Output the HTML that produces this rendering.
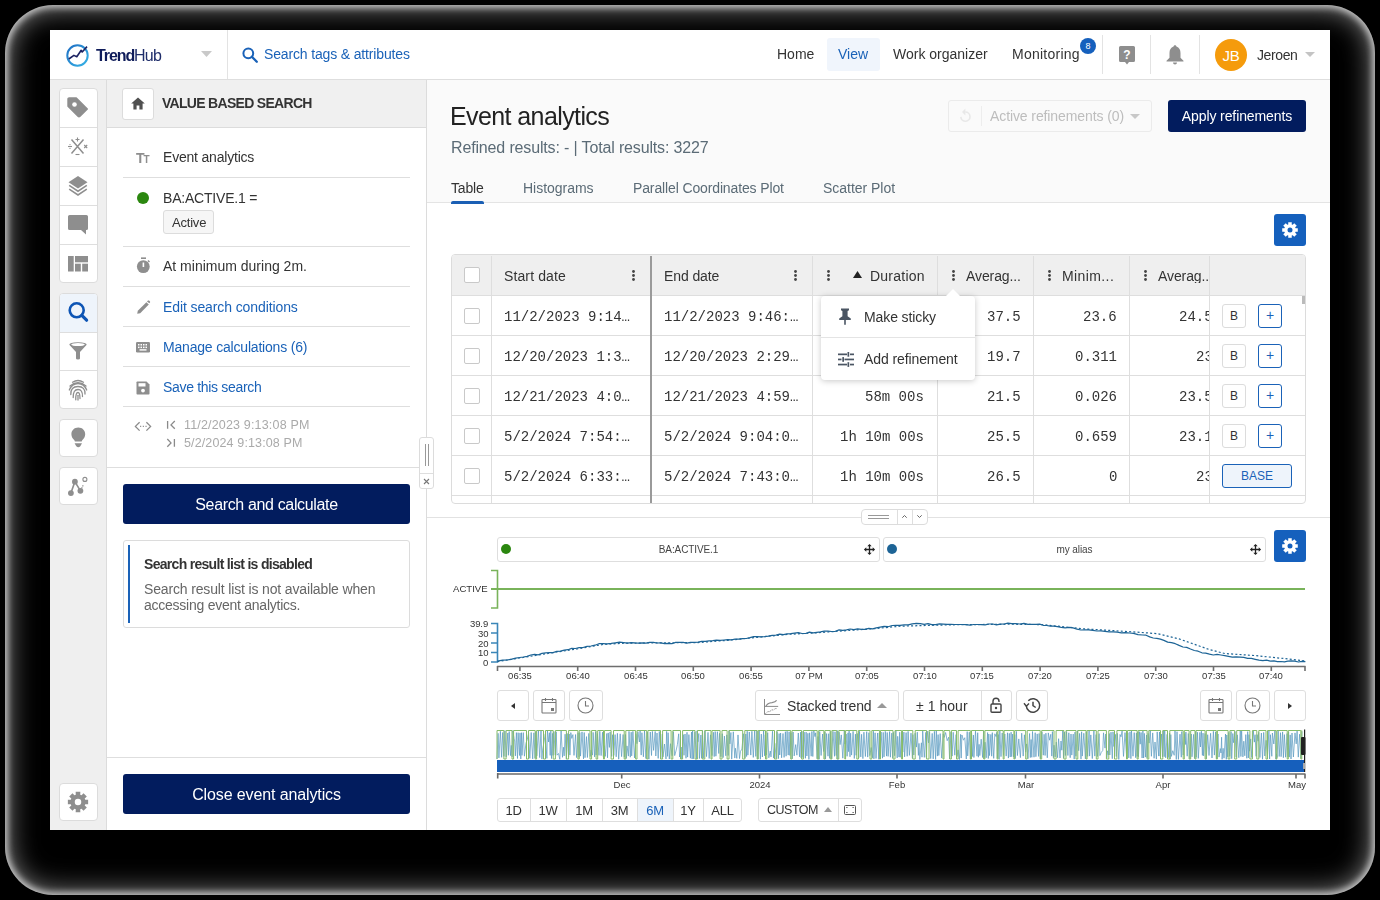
<!DOCTYPE html>
<html><head><meta charset="utf-8">
<style>
*{box-sizing:border-box}
html,body{margin:0;padding:0}
body{width:1380px;height:900px;background:#000;position:relative;overflow:hidden;font-family:"Liberation Sans",sans-serif;color:#333}
.a{position:absolute}
.t{position:absolute;white-space:nowrap;line-height:1;will-change:transform}
.mono{font-family:"Liberation Mono",monospace}
#rim{position:absolute;left:5px;top:5px;width:1370px;height:890px;border-radius:48px;background:#000;box-shadow:inset 0 0 6px 3px rgba(255,255,255,.6),inset 0 0 30px 0 rgba(255,255,255,.65)}
#win{position:absolute;left:50px;top:30px;width:1280px;height:800px;background:#fff}
.box{position:absolute;border:1px solid #dcdcdc;border-radius:4px;background:#fff}
.hl{position:absolute;height:1px;background:#dedede}
.vl{position:absolute;width:1px;background:#dedede}
svg{position:absolute;overflow:visible}
.blue{color:#1a62b8}
</style></head><body>
<div id="rim"></div>
<div id="win"></div>

<!-- ============ TOP BAR ============ -->
<div class="a" style="left:50px;top:79px;width:1280px;height:1px;background:#dedede"></div>
<!-- logo -->
<svg style="left:66px;top:44px" width="23" height="23" viewBox="0 0 23 23">
 <defs><linearGradient id="lg" x1="0" y1="0" x2="1" y2="1"><stop offset="0" stop-color="#1f6fc4"/><stop offset="1" stop-color="#36b3e6"/></linearGradient></defs>
 <circle cx="11.5" cy="11.5" r="10.2" fill="none" stroke="url(#lg)" stroke-width="2"/>
 <path d="M2.8 15 L7.9 11.4 L10.8 12.8 L15.2 6.3 L16.2 8 L21 2.6" fill="none" stroke="#1c2262" stroke-width="1.6" stroke-linejoin="round"/>
</svg>
<div class="t" style="left:95.5px;top:47.5px;font-size:16px;color:#0f1c5a"><b style="letter-spacing:-1.1px">Trend</b><span style="letter-spacing:-0.8px;color:#1f2d6a">Hub</span></div>
<svg style="left:201px;top:51px" width="11" height="6"><path d="M0 0H11L5.5 6Z" fill="#c9c9c9"/></svg>
<div class="a" style="left:227px;top:30px;width:1px;height:49px;background:#e3e3e3"></div>
<!-- search -->
<svg style="left:242px;top:47px" width="16" height="16" viewBox="0 0 16 16"><circle cx="6.3" cy="6.3" r="4.9" fill="none" stroke="#1a62b8" stroke-width="2"/><path d="M9.8 9.8L14.8 14.8" stroke="#1a62b8" stroke-width="2.3" stroke-linecap="round"/></svg>
<div class="t blue" style="left:264px;top:47px;font-size:14px;letter-spacing:-0.15px">Search tags &amp; attributes</div>

<!-- nav -->
<div class="t" style="left:777px;top:47px;font-size:14px;color:#333">Home</div>
<div class="a" style="left:827px;top:38px;width:53px;height:33px;background:#f0f5fc;border-radius:3px"></div>
<div class="t blue" style="left:838px;top:47px;font-size:14px">View</div>
<div class="t" style="left:893px;top:47px;font-size:14px;color:#333">Work organizer</div>
<div class="t" style="left:1012px;top:47px;font-size:14px;color:#333;letter-spacing:0.25px">Monitoring</div>
<div class="a" style="left:1080px;top:38px;width:16px;height:16px;border-radius:50%;background:#1560bd;color:#fff;font-size:9px;line-height:16px;text-align:center">8</div>
<div class="a" style="left:1102px;top:35px;width:1px;height:39px;background:#e3e3e3"></div>
<svg style="left:1119px;top:46px" width="16" height="19" viewBox="0 0 16 19"><path d="M1.5 0H14.5Q16 0 16 1.5V14.5Q16 16 14.5 16H10L8 18.5L6 16H1.5Q0 16 0 14.5V1.5Q0 0 1.5 0Z" fill="#8e8e8e"/><text x="8" y="12.8" font-size="12" font-weight="bold" fill="#fff" text-anchor="middle" font-family="Liberation Sans">?</text></svg>
<div class="a" style="left:1150px;top:35px;width:1px;height:39px;background:#e3e3e3"></div>
<svg style="left:1166px;top:44px" width="18" height="21" viewBox="0 0 18 21"><path d="M9 1.2C9.9 1.2 10.4 1.8 10.4 2.6C13.3 3.4 14.5 6 14.5 9V13.8L17.5 16.8V17.6H0.5V16.8L3.5 13.8V9C3.5 6 4.7 3.4 7.6 2.6C7.6 1.8 8.1 1.2 9 1.2Z" fill="#8e8e8e"/><path d="M7 18.6H11Q11 20.6 9 20.6Q7 20.6 7 18.6Z" fill="#8e8e8e"/></svg>
<div class="a" style="left:1199px;top:35px;width:1px;height:39px;background:#e3e3e3"></div>
<div class="a" style="left:1215px;top:39px;width:32px;height:32px;border-radius:50%;background:#f59b0c;color:#fff;font-size:15px;line-height:33px;text-align:center;letter-spacing:-0.2px">JB</div>
<div class="t" style="left:1257px;top:48px;font-size:14px;color:#333;letter-spacing:-0.4px">Jeroen</div>
<svg style="left:1305px;top:52px" width="10" height="5"><path d="M0 0H10L5 5Z" fill="#c4c4c4"/></svg>

<!-- ============ LEFT RAIL ============ -->
<div class="a" style="left:50px;top:80px;width:57px;height:750px;background:#efefef;border-right:1px solid #dcdcdc"></div>


<!-- rail boxes -->
<div class="box" style="left:59px;top:88px;width:39px;height:195px"></div>
<div class="hl" style="left:60px;top:127px;width:37px"></div>
<div class="hl" style="left:60px;top:166px;width:37px"></div>
<div class="hl" style="left:60px;top:205px;width:37px"></div>
<div class="hl" style="left:60px;top:244px;width:37px"></div>
<div class="box" style="left:59px;top:293px;width:39px;height:116px"></div>
<div class="a" style="left:60px;top:294px;width:37px;height:38px;background:#eef4fb;border-radius:3px 3px 0 0"></div>
<div class="hl" style="left:60px;top:332px;width:37px"></div>
<div class="hl" style="left:60px;top:370px;width:37px"></div>
<div class="box" style="left:59px;top:419px;width:39px;height:38px"></div>
<div class="box" style="left:59px;top:467px;width:39px;height:38px"></div>
<div class="box" style="left:59px;top:783px;width:39px;height:38px"></div>
<!-- tag -->
<svg style="left:67px;top:97px" width="22" height="22" viewBox="0 0 22 22"><path d="M1 2.2Q1 1 2.2 1H9.3L20.3 12L13 19.3Q12 20.3 11 19.3L1 9.3Z" fill="#8e8e8e" stroke="#8e8e8e" stroke-width="1.4" stroke-linejoin="round"/><circle cx="7.5" cy="7.5" r="2.3" fill="#fff"/></svg>
<!-- calc cross -->
<svg style="left:67px;top:137px" width="22" height="19" viewBox="0 0 22 19" stroke="#8e8e8e" fill="none"><path d="M4.5 2.5L16.5 16.5M16.5 2.5L4.5 16.5" stroke-width="1.5"/><path d="M10.5 0.5V4.5M8.5 2.5H12.5" stroke-width="1.1"/><path d="M8.5 17.5H12.5" stroke-width="1.1"/><path d="M1 9.5H5" stroke-width="1.1"/><circle cx="3" cy="7.6" r=".6" fill="#8e8e8e" stroke="none"/><circle cx="3" cy="11.4" r=".6" fill="#8e8e8e" stroke="none"/><path d="M17.2 8L20.2 11M20.2 8L17.2 11" stroke-width="1.1"/></svg>
<!-- layers -->
<svg style="left:68px;top:175px" width="20" height="21" viewBox="0 0 20 21"><path d="M10 1L19.5 7.2L10 13.4L0.5 7.2Z" fill="#8e8e8e"/><path d="M1.2 10.4L10 16.2L18.8 10.4" fill="none" stroke="#8e8e8e" stroke-width="1.6"/><path d="M1.2 14.2L10 20L18.8 14.2" fill="none" stroke="#8e8e8e" stroke-width="1.6"/></svg>
<!-- comment -->
<svg style="left:68px;top:215px" width="20" height="20" viewBox="0 0 20 20"><path d="M1.6 0H18.4Q20 0 20 1.6V13.4Q20 15 18.4 15H18V19.6L13 15H1.6Q0 15 0 13.4V1.6Q0 0 1.6 0Z" fill="#8e8e8e"/></svg>
<!-- dashboard -->
<svg style="left:68px;top:256px" width="20" height="16" viewBox="0 0 20 16" fill="#8e8e8e"><rect x="0" y="0" width="5.7" height="15.5"/><rect x="7" y="0" width="13" height="6.3"/><rect x="7" y="7.7" width="5.8" height="7.8"/><rect x="14.2" y="7.7" width="5.8" height="7.8"/></svg>
<!-- search blue -->
<svg style="left:67px;top:300px" width="22" height="23" viewBox="0 0 22 23"><circle cx="9.7" cy="10.3" r="7" fill="none" stroke="#0d55b5" stroke-width="2.6"/><path d="M14.8 15.4L19.6 20.2" stroke="#0d55b5" stroke-width="3.2" stroke-linecap="round"/></svg>
<!-- funnel -->
<svg style="left:69px;top:342px" width="18" height="18" viewBox="0 0 18 18"><path d="M0.3 2.8Q0.3 0.2 9 0.2Q17.7 0.2 17.7 2.8L11 10V16.5Q11 17.6 9 17.6Q7 17.6 7 16.5V10Z" fill="#8e8e8e"/><ellipse cx="9" cy="2.6" rx="6.8" ry="1.5" fill="#fff"/></svg>
<!-- fingerprint -->
<svg style="left:68px;top:379px" width="20" height="22" viewBox="0 0 20 22" fill="none" stroke="#8e8e8e" stroke-width="1.3" stroke-linecap="round"><path d="M4.5 3.2Q10 -0.2 15.5 3.2"/><path d="M2 7Q10 0.5 18 7"/><path d="M1.3 11Q4 4.5 10 4.5Q16 4.5 18.7 11"/><path d="M2.8 15.5Q2.5 7.5 10 7.5Q17.3 7.5 17 15"/><path d="M5.2 18.5Q5 10.5 10 10.5Q14.7 10.5 14.5 17.5"/><path d="M7.8 20.8Q7.5 13.5 10 13.5Q12 13.5 12 19.5"/><path d="M10 16.3V21"/></svg>
<!-- bulb -->
<svg style="left:71px;top:427px" width="15" height="22" viewBox="0 0 15 22" fill="#8e8e8e"><path d="M7.3 0.6C11.3 0.6 14.2 3.5 14.2 7.3C14.2 10 12.8 11.7 11.2 13.3L10.7 14.5H3.9L3.4 13.3C1.8 11.7 0.4 10 0.4 7.3C0.4 3.5 3.3 0.6 7.3 0.6Z"/><path d="M3.6 16.2H11L9.3 19.3Q7.3 21.4 5.3 19.3Z"/></svg>
<!-- graph -->
<svg style="left:66px;top:476px" width="24" height="21" viewBox="0 0 24 21"><path d="M4.9 17.1L8.9 5.7L14.4 14.8" fill="none" stroke="#8e8e8e" stroke-width="1.6"/><path d="M15.6 12.5L17.5 8.5" fill="none" stroke="#8e8e8e" stroke-width="1.2" stroke-dasharray="1.3 1"/><circle cx="4.9" cy="17.1" r="2.9" fill="#8e8e8e"/><circle cx="8.9" cy="5.7" r="2.9" fill="#8e8e8e"/><circle cx="14.4" cy="14.8" r="2.9" fill="#8e8e8e"/><circle cx="18.9" cy="3.4" r="2" fill="none" stroke="#8e8e8e" stroke-width="1.1"/></svg>
<!-- gear rail -->
<svg style="left:65px;top:789px" width="26" height="26" viewBox="0 0 24 24"><path fill-rule="evenodd" fill="#8e8e8e" d="M18.69 9.95 L21.35 9.84 L21.35 14.16 L18.69 14.05 L18.18 15.29 L20.14 17.09 L17.09 20.14 L15.29 18.18 L14.05 18.69 L14.16 21.35 L9.84 21.35 L9.95 18.69 L8.71 18.18 L6.91 20.14 L3.86 17.09 L5.82 15.29 L5.31 14.05 L2.65 14.16 L2.65 9.84 L5.31 9.95 L5.82 8.71 L3.86 6.91 L6.91 3.86 L8.71 5.82 L9.95 5.31 L9.84 2.65 L14.16 2.65 L14.05 5.31 L15.29 5.82 L17.09 3.86 L20.14 6.91 L18.18 8.71ZM15.00 12.00A3.00 3.00 0 1 0 9.00 12.00A3.00 3.00 0 1 0 15.00 12.00Z"/></svg>

<!-- ============ PANEL ============ -->
<div class="a" style="left:107px;top:80px;width:319px;height:48px;background:#f0f0f0;border-bottom:1px solid #dcdcdc"></div>
<div class="a" style="left:426px;top:80px;width:1px;height:750px;background:#dcdcdc"></div>


<!-- panel header -->
<div class="box" style="left:122px;top:88px;width:32px;height:32px;border-radius:3px"></div>
<svg style="left:131px;top:97px" width="14" height="13" viewBox="0 0 14 13"><path d="M7 0.5L13.8 6.6H11.6V12.5H8.4V8.6H5.6V12.5H2.4V6.6H0.2Z" fill="#505050"/></svg>
<div class="t" style="left:162px;top:96px;font-size:14px;font-weight:bold;color:#333;letter-spacing:-0.7px">VALUE BASED SEARCH</div>
<!-- rows -->
<div class="t" style="left:136px;top:151px;font-size:14px;font-weight:bold;color:#8e8e8e;letter-spacing:-1px">T<span style="font-size:10px">T</span></div>
<div class="t" style="left:163px;top:150px;font-size:14px;color:#333;letter-spacing:-0.2px">Event analytics</div>
<div class="hl" style="left:123px;top:177px;width:287px"></div>
<div class="a" style="left:137px;top:192px;width:12px;height:12px;border-radius:50%;background:#2b870f"></div>
<div class="t" style="left:163px;top:191px;font-size:14px;color:#333;letter-spacing:-0.2px">BA:ACTIVE.1 =</div>
<div class="a" style="left:163px;top:210px;width:51px;height:24px;background:#f6f6f6;border:1px solid #dcdcdc;border-radius:3px"></div>
<div class="t" style="left:172px;top:216px;font-size:13px;color:#333;letter-spacing:-0.2px">Active</div>
<div class="hl" style="left:123px;top:246px;width:287px"></div>
<svg style="left:136px;top:257px" width="15" height="17" viewBox="0 0 15 17"><rect x="5" y="0.4" width="5" height="1.6" fill="#8e8e8e"/><circle cx="7.3" cy="9.6" r="6.4" fill="#8e8e8e"/><path d="M12 3.5L13.5 5" stroke="#8e8e8e" stroke-width="1.5"/><rect x="6.6" y="5.5" width="1.6" height="4.5" fill="#fff"/></svg>
<div class="t" style="left:163px;top:259px;font-size:14px;color:#333">At minimum during 2m.</div>
<div class="hl" style="left:123px;top:286px;width:287px"></div>
<svg style="left:136px;top:300px" width="14" height="15" viewBox="0 0 14 15"><path d="M1.2 13.8L1.8 10.8L10.4 2.2L12.8 4.6L4.2 13.2Z" fill="#8e8e8e"/><path d="M11 1.6L12 0.6Q12.5 0.2 13 0.6L14 1.6Q14.3 2 14 2.5L13.3 3.3Z" fill="#8e8e8e"/></svg>
<div class="t blue" style="left:163px;top:300px;font-size:14px;letter-spacing:-0.1px">Edit search conditions</div>
<div class="hl" style="left:123px;top:326px;width:287px"></div>
<svg style="left:136px;top:342px" width="14" height="11" viewBox="0 0 14 11"><rect x="0" y="0" width="14" height="10.5" rx="1.2" fill="#8e8e8e"/><g fill="#fff"><rect x="2" y="2" width="1.5" height="1.5"/><rect x="4.5" y="2" width="1.5" height="1.5"/><rect x="7" y="2" width="1.5" height="1.5"/><rect x="9.5" y="2" width="1.5" height="1.5"/><rect x="2" y="4.6" width="1.5" height="1.5"/><rect x="4.5" y="4.6" width="1.5" height="1.5"/><rect x="7" y="4.6" width="1.5" height="1.5"/><rect x="9.5" y="4.6" width="1.5" height="1.5"/><rect x="3.5" y="7.2" width="7" height="1.4"/></g></svg>
<div class="t blue" style="left:163px;top:340px;font-size:14px;letter-spacing:-0.19px">Manage calculations (6)</div>
<div class="hl" style="left:123px;top:366px;width:287px"></div>
<svg style="left:136px;top:381px" width="14" height="14" viewBox="0 0 14 14"><path d="M1.3 0.5H10.5L13.5 3.5V12.7Q13.5 13.5 12.7 13.5H1.3Q0.5 13.5 0.5 12.7V1.3Q0.5 0.5 1.3 0.5Z" fill="#8e8e8e"/><rect x="2.5" y="2.2" width="7" height="3.3" fill="#fff"/><circle cx="7" cy="9.6" r="1.9" fill="#fff"/></svg>
<div class="t blue" style="left:163px;top:380px;font-size:14px;letter-spacing:-0.32px">Save this search</div>
<div class="hl" style="left:123px;top:406px;width:287px"></div>
<svg style="left:0;top:0" width="1380" height="900" fill="none" stroke="#8a8a8a" stroke-width="1.3"><path d="M139.6 422.2L135.4 426.4L139.6 430.6M146.4 422.2L150.6 426.4L146.4 430.6"/><path d="M139.5 426.4H147" stroke-dasharray="1.1 1.6" stroke-dashoffset="-0.6" stroke-width="1.2"/><path d="M167.6 421V428.8M174.8 421L171 424.9L174.8 428.8M167.3 439L171 442.9L167.3 446.8M174.4 439V446.8"/></svg>

<div class="t" style="left:184px;top:419px;font-size:12.5px;color:#aaa;letter-spacing:0.17px">11/2/2023 9:13:08 PM</div>

<div class="t" style="left:184px;top:437px;font-size:12.5px;color:#aaa;letter-spacing:0.13px">5/2/2024 9:13:08 PM</div>
<div class="hl" style="left:107px;top:467px;width:319px"></div>
<!-- resize handle -->
<div class="a" style="left:419px;top:437px;width:15px;height:52px;background:#fff;border:1px solid #dcdcdc;border-radius:3px"></div>
<div class="hl" style="left:420px;top:473px;width:13px"></div>
<div class="a" style="left:424.5px;top:444px;width:1px;height:22px;background:#999"></div>
<div class="a" style="left:428px;top:444px;width:1px;height:22px;background:#999"></div>
<svg style="left:423px;top:478px" width="7" height="7" viewBox="0 0 7 7"><path d="M1 1L6 6M6 1L1 6" stroke="#777" stroke-width="1.1"/></svg>
<!-- buttons -->
<div class="a" style="left:123px;top:484px;width:287px;height:40px;background:#021c5e;border-radius:3px"></div>
<div class="t" style="left:123px;top:497px;width:287px;text-align:center;font-size:16px;color:#fff;letter-spacing:-0.35px">Search and calculate</div>
<div class="box" style="left:123px;top:540px;width:287px;height:88px;border-radius:3px"></div>
<div class="a" style="left:128px;top:545px;width:2px;height:78px;background:#1a62b8"></div>
<div class="t" style="left:144px;top:557px;font-size:14px;font-weight:bold;color:#333;letter-spacing:-0.7px">Search result list is disabled</div>
<div class="t" style="left:144px;top:581px;font-size:14px;color:#666;letter-spacing:-0.15px;line-height:16px">Search result list is not available when<br><span style="letter-spacing:-0.25px">accessing event analytics.</span></div>
<div class="hl" style="left:107px;top:757px;width:319px"></div>
<div class="a" style="left:123px;top:774px;width:287px;height:40px;background:#021c5e;border-radius:3px"></div>
<div class="t" style="left:123px;top:787px;width:287px;text-align:center;font-size:16px;color:#fff;letter-spacing:-0.12px">Close event analytics</div>

<!-- ============ MAIN ============ -->
<div class="a" style="left:427px;top:80px;width:903px;height:123px;background:#fafafa;border-bottom:1px solid #e4e4e4"></div>


<!-- header -->
<div class="t" style="left:449.8px;top:103.8px;font-size:25px;color:#222;letter-spacing:-0.6px">Event analytics</div>
<div class="t" style="left:451px;top:140px;font-size:16px;color:#5b6b76;letter-spacing:-0.15px">Refined results: - | Total results: 3227</div>
<div class="a" style="left:948px;top:100px;width:204px;height:32px;background:#fafafa;border:1px solid #ebebeb;border-radius:3px"></div>
<div class="a" style="left:981px;top:106px;width:1px;height:20px;background:#ededed"></div>
<svg style="left:958px;top:108px" width="14" height="14" viewBox="0 0 14 14"><path d="M2.8 8.9A4.6 4.6 0 1 0 7.3 4" fill="none" stroke="#e8e8e8" stroke-width="1.6"/><path d="M4 4L7.4 0.4V7.6Z" fill="#e8e8e8"/></svg>
<div class="t" style="left:990px;top:109px;font-size:14px;color:#bdbdbd;letter-spacing:-0.1px">Active refinements (0)</div>
<svg style="left:1130px;top:114px" width="10" height="5"><path d="M0 0H10L5 5Z" fill="#c8c8c8"/></svg>
<div class="a" style="left:1168px;top:100px;width:138px;height:32px;background:#021c5e;border-radius:3px"></div>
<div class="t" style="left:1168px;top:109px;width:138px;text-align:center;font-size:14px;color:#fff;letter-spacing:-0.1px">Apply refinements</div>
<!-- tabs -->
<div class="t" style="left:451px;top:181px;font-size:14px;color:#333;letter-spacing:-0.15px">Table</div>
<div class="a" style="left:451px;top:201px;width:33px;height:3px;background:#1a5fb4;border-radius:2px 2px 0 0"></div>
<div class="t" style="left:523px;top:181px;font-size:14px;color:#5b6b76;letter-spacing:-0.03px">Histograms</div>
<div class="t" style="left:632.5px;top:181px;font-size:14px;color:#5b6b76;letter-spacing:-0.13px">Parallel Coordinates Plot</div>
<div class="t" style="left:822.7px;top:181px;font-size:14px;color:#5b6b76;letter-spacing:-0.03px">Scatter Plot</div>
<!-- gear btn -->
<div class="a" style="left:1274px;top:214px;width:32px;height:32px;background:#1560bd;border-radius:3px"></div>
<svg style="left:1280px;top:220px" width="20" height="20" viewBox="0 0 24 24"><path fill-rule="evenodd" fill="#fff" d="M18.69 9.95 L21.35 9.84 L21.35 14.16 L18.69 14.05 L18.18 15.29 L20.14 17.09 L17.09 20.14 L15.29 18.18 L14.05 18.69 L14.16 21.35 L9.84 21.35 L9.95 18.69 L8.71 18.18 L6.91 20.14 L3.86 17.09 L5.82 15.29 L5.31 14.05 L2.65 14.16 L2.65 9.84 L5.31 9.95 L5.82 8.71 L3.86 6.91 L6.91 3.86 L8.71 5.82 L9.95 5.31 L9.84 2.65 L14.16 2.65 L14.05 5.31 L15.29 5.82 L17.09 3.86 L20.14 6.91 L18.18 8.71ZM15.00 12.00A3.00 3.00 0 1 0 9.00 12.00A3.00 3.00 0 1 0 15.00 12.00Z"/></svg>
<div class="a" style="left:451px;top:254px;width:855px;height:250px;border:1px solid #dcdcdc;border-radius:4px;overflow:hidden;background:#fff">
<div class="a" style="left:0;top:0;width:853px;height:41px;background:#efefef"></div>
</div>
<div class="hl" style="left:452px;top:295px;width:853px"></div>
<div class="hl" style="left:452px;top:335px;width:853px"></div>
<div class="hl" style="left:452px;top:375px;width:853px"></div>
<div class="hl" style="left:452px;top:415px;width:853px"></div>
<div class="hl" style="left:452px;top:455px;width:853px"></div>
<div class="hl" style="left:452px;top:495px;width:853px"></div>
<div class="vl" style="left:491px;top:256px;height:247px"></div>
<div class="vl" style="left:812px;top:256px;height:247px"></div>
<div class="vl" style="left:937px;top:256px;height:247px"></div>
<div class="vl" style="left:1033px;top:256px;height:247px"></div>
<div class="vl" style="left:1129px;top:256px;height:247px"></div>
<div class="vl" style="left:1209px;top:256px;height:247px"></div>
<div class="a" style="left:650px;top:256px;width:2px;height:247px;background:#9a9a9a"></div>
<div class="a" style="left:464px;top:267px;width:16px;height:16px;border:1px solid #c9c9c9;border-radius:2px;background:#fff"></div>
<div class="a" style="left:464px;top:308px;width:16px;height:16px;border:1px solid #c9c9c9;border-radius:2px;background:#fff"></div>
<div class="a" style="left:464px;top:348px;width:16px;height:16px;border:1px solid #c9c9c9;border-radius:2px;background:#fff"></div>
<div class="a" style="left:464px;top:388px;width:16px;height:16px;border:1px solid #c9c9c9;border-radius:2px;background:#fff"></div>
<div class="a" style="left:464px;top:428px;width:16px;height:16px;border:1px solid #c9c9c9;border-radius:2px;background:#fff"></div>
<div class="a" style="left:464px;top:468px;width:16px;height:16px;border:1px solid #c9c9c9;border-radius:2px;background:#fff"></div>
<div class="t" style="left:504px;top:269px;font-size:14px;color:#333;letter-spacing:0.12px">Start date</div>
<svg style="left:632px;top:270px" width="3" height="11" viewBox="0 0 3 11" fill="#444"><circle cx="1.5" cy="1.5" r="1.4"/><circle cx="1.5" cy="5.5" r="1.4"/><circle cx="1.5" cy="9.5" r="1.4"/></svg>
<div class="t" style="left:664px;top:269px;font-size:14px;color:#333;letter-spacing:-0.1px">End date</div>
<svg style="left:794px;top:270px" width="3" height="11" viewBox="0 0 3 11" fill="#444"><circle cx="1.5" cy="1.5" r="1.4"/><circle cx="1.5" cy="5.5" r="1.4"/><circle cx="1.5" cy="9.5" r="1.4"/></svg>
<svg style="left:827px;top:270px" width="3" height="11" viewBox="0 0 3 11" fill="#444"><circle cx="1.5" cy="1.5" r="1.4"/><circle cx="1.5" cy="5.5" r="1.4"/><circle cx="1.5" cy="9.5" r="1.4"/></svg>
<svg style="left:853px;top:271px" width="9" height="7"><path d="M0 7H9L4.5 0Z" fill="#222"/></svg>
<div class="t" style="left:870px;top:269px;font-size:14px;color:#333;letter-spacing:0.23px">Duration</div>
<svg style="left:952px;top:270px" width="3" height="11" viewBox="0 0 3 11" fill="#444"><circle cx="1.5" cy="1.5" r="1.4"/><circle cx="1.5" cy="5.5" r="1.4"/><circle cx="1.5" cy="9.5" r="1.4"/></svg>
<div class="t" style="left:966px;top:269px;font-size:14px;color:#333;letter-spacing:-0.1px">Averag...</div>
<svg style="left:1048px;top:270px" width="3" height="11" viewBox="0 0 3 11" fill="#444"><circle cx="1.5" cy="1.5" r="1.4"/><circle cx="1.5" cy="5.5" r="1.4"/><circle cx="1.5" cy="9.5" r="1.4"/></svg>
<div class="t" style="left:1062px;top:269px;font-size:14px;color:#333;letter-spacing:0.4px">Minim...</div>
<svg style="left:1144px;top:270px" width="3" height="11" viewBox="0 0 3 11" fill="#444"><circle cx="1.5" cy="1.5" r="1.4"/><circle cx="1.5" cy="5.5" r="1.4"/><circle cx="1.5" cy="9.5" r="1.4"/></svg>
<div class="t" style="left:1158px;top:269px;font-size:14px;color:#333;letter-spacing:-0.1px;width:51px;overflow:hidden">Averag..</div>
<div class="t mono" style="left:504px;top:310px;font-size:14px;color:#333">11/2/2023 9:14…</div>
<div class="t mono" style="left:664px;top:310px;font-size:14px;color:#333">11/2/2023 9:46:…</div>
<div class="t mono" style="right:359px;top:310px;font-size:14px;color:#333">37.5</div>
<div class="t mono" style="right:263px;top:310px;font-size:14px;color:#333">23.6</div>
<div class="a" style="left:1130px;top:310px;width:79px;height:20px;overflow:hidden"><div class="t mono" style="right:-4px;top:0;font-size:14px;color:#333">24.5</div></div>
<div class="a" style="left:1222px;top:304px;width:24px;height:24px;border:1px solid #dcdcdc;border-radius:3px;background:#fff;font-size:12px;line-height:22px;text-align:center;color:#333">B</div>
<div class="a" style="left:1258px;top:304px;width:24px;height:24px;border:1px solid #1a62b8;border-radius:3px;background:#fff;font-size:14px;line-height:21px;text-align:center;color:#1a62b8">+</div>
<div class="t mono" style="left:504px;top:350px;font-size:14px;color:#333">12/20/2023 1:3…</div>
<div class="t mono" style="left:664px;top:350px;font-size:14px;color:#333">12/20/2023 2:29…</div>
<div class="t mono" style="right:359px;top:350px;font-size:14px;color:#333">19.7</div>
<div class="t mono" style="right:263px;top:350px;font-size:14px;color:#333">0.311</div>
<div class="a" style="left:1130px;top:350px;width:79px;height:20px;overflow:hidden"><div class="t mono" style="right:-4px;top:0;font-size:14px;color:#333">23</div></div>
<div class="a" style="left:1222px;top:344px;width:24px;height:24px;border:1px solid #dcdcdc;border-radius:3px;background:#fff;font-size:12px;line-height:22px;text-align:center;color:#333">B</div>
<div class="a" style="left:1258px;top:344px;width:24px;height:24px;border:1px solid #1a62b8;border-radius:3px;background:#fff;font-size:14px;line-height:21px;text-align:center;color:#1a62b8">+</div>
<div class="t mono" style="left:504px;top:390px;font-size:14px;color:#333">12/21/2023 4:0…</div>
<div class="t mono" style="left:664px;top:390px;font-size:14px;color:#333">12/21/2023 4:59…</div>
<div class="t mono" style="right:456px;top:390px;font-size:14px;color:#333">58m 00s</div>
<div class="t mono" style="right:359px;top:390px;font-size:14px;color:#333">21.5</div>
<div class="t mono" style="right:263px;top:390px;font-size:14px;color:#333">0.026</div>
<div class="a" style="left:1130px;top:390px;width:79px;height:20px;overflow:hidden"><div class="t mono" style="right:-4px;top:0;font-size:14px;color:#333">23.5</div></div>
<div class="a" style="left:1222px;top:384px;width:24px;height:24px;border:1px solid #dcdcdc;border-radius:3px;background:#fff;font-size:12px;line-height:22px;text-align:center;color:#333">B</div>
<div class="a" style="left:1258px;top:384px;width:24px;height:24px;border:1px solid #1a62b8;border-radius:3px;background:#fff;font-size:14px;line-height:21px;text-align:center;color:#1a62b8">+</div>
<div class="t mono" style="left:504px;top:430px;font-size:14px;color:#333">5/2/2024 7:54:…</div>
<div class="t mono" style="left:664px;top:430px;font-size:14px;color:#333">5/2/2024 9:04:0…</div>
<div class="t mono" style="right:456px;top:430px;font-size:14px;color:#333">1h 10m 00s</div>
<div class="t mono" style="right:359px;top:430px;font-size:14px;color:#333">25.5</div>
<div class="t mono" style="right:263px;top:430px;font-size:14px;color:#333">0.659</div>
<div class="a" style="left:1130px;top:430px;width:79px;height:20px;overflow:hidden"><div class="t mono" style="right:-4px;top:0;font-size:14px;color:#333">23.1</div></div>
<div class="a" style="left:1222px;top:424px;width:24px;height:24px;border:1px solid #dcdcdc;border-radius:3px;background:#fff;font-size:12px;line-height:22px;text-align:center;color:#333">B</div>
<div class="a" style="left:1258px;top:424px;width:24px;height:24px;border:1px solid #1a62b8;border-radius:3px;background:#fff;font-size:14px;line-height:21px;text-align:center;color:#1a62b8">+</div>
<div class="t mono" style="left:504px;top:470px;font-size:14px;color:#333">5/2/2024 6:33:…</div>
<div class="t mono" style="left:664px;top:470px;font-size:14px;color:#333">5/2/2024 7:43:0…</div>
<div class="t mono" style="right:456px;top:470px;font-size:14px;color:#333">1h 10m 00s</div>
<div class="t mono" style="right:359px;top:470px;font-size:14px;color:#333">26.5</div>
<div class="t mono" style="right:263px;top:470px;font-size:14px;color:#333">0</div>
<div class="a" style="left:1130px;top:470px;width:79px;height:20px;overflow:hidden"><div class="t mono" style="right:-4px;top:0;font-size:14px;color:#333">23</div></div>
<div class="a" style="left:1222px;top:464px;width:70px;height:24px;border:1px solid #1a62b8;border-radius:3px;background:#eef4fb;font-size:12px;line-height:22px;text-align:center;color:#1a62b8">BASE</div>
<div class="a" style="left:1302px;top:296px;width:3px;height:8px;background:#bbb"></div>
<div class="a" style="left:821px;top:296px;width:154px;height:84px;background:#fff;border-radius:4px;box-shadow:0 1px 6px rgba(0,0,0,.22)"></div>
<svg style="left:945px;top:289px" width="16" height="8"><path d="M0 8L8 0L16 8Z" fill="#fff"/></svg>
<div class="hl" style="left:821px;top:337px;width:154px;background:#e4e4e4"></div>
<svg style="left:838px;top:308px" width="14" height="17" viewBox="0 0 14 17"><path d="M3 0.5H11V2.2L9.6 3V8.3L12.8 10.5V12H7.8V16.8H6.2V12H1.2V10.5L4.4 8.3V3L3 2.2Z" fill="#4a5563"/></svg>
<div class="t" style="left:864px;top:310px;font-size:14px;color:#333;letter-spacing:-0.1px">Make sticky</div>
<svg style="left:838px;top:352px" width="16" height="15" viewBox="0 0 16 15" fill="#4a5563"><rect x="0" y="1.5" width="9" height="1.7"/><rect x="12" y="1.5" width="4" height="1.7"/><rect x="9.5" y="0" width="1.7" height="4.7"/><rect x="0" y="6.6" width="3.5" height="1.7"/><rect x="6.5" y="6.6" width="9.5" height="1.7"/><rect x="4.3" y="5.1" width="1.7" height="4.7"/><rect x="0" y="11.7" width="9" height="1.7"/><rect x="12" y="11.7" width="4" height="1.7"/><rect x="9.5" y="10.2" width="1.7" height="4.7"/></svg>
<div class="t" style="left:864px;top:352px;font-size:14px;color:#333;letter-spacing:-0.1px">Add refinement</div>
<div class="hl" style="left:427px;top:517px;width:903px;background:#e2e2e2"></div>
<div class="a" style="left:861px;top:509px;width:67px;height:16px;background:#fff;border:1px solid #dcdcdc;border-radius:4px"></div>
<div class="vl" style="left:897px;top:510px;height:14px"></div><div class="vl" style="left:912px;top:510px;height:14px"></div>
<div class="hl" style="left:868px;top:515px;width:21px;background:#999"></div><div class="hl" style="left:868px;top:518px;width:21px;background:#999"></div>
<svg style="left:902px;top:515px" width="5" height="3"><path d="M0.3 2.7L2.5 0.5L4.7 2.7" fill="none" stroke="#666" stroke-width="1"/></svg>
<svg style="left:917px;top:515px" width="5" height="3"><path d="M0.3 0.3L2.5 2.5L4.7 0.3" fill="none" stroke="#666" stroke-width="1"/></svg>
<div class="box" style="left:497px;top:537px;width:383px;height:25px;border-radius:3px;border-color:#dedede"></div>
<div class="a" style="left:501px;top:544px;width:10px;height:10px;border-radius:50%;background:#2b870f"></div>
<div class="t" style="left:497px;top:545px;width:383px;text-align:center;font-size:10px;color:#444;letter-spacing:-0.1px">BA:ACTIVE.1</div>
<svg style="left:863.2px;top:542.9px" width="13" height="13" viewBox="-6.5 -6.5 13 13"><path d="M-4.2 0H4.2M0 -4.2V4.2" stroke="#222" stroke-width="1.3"/><path d="M-5.6 0L-3.2 -2.2V2.2ZM5.6 0L3.2 -2.2V2.2ZM0 -5.6L-2.2 -3.2H2.2ZM0 5.6L-2.2 3.2H2.2Z" fill="#222"/></svg>
<div class="box" style="left:883px;top:537px;width:383px;height:25px;border-radius:3px;border-color:#dedede"></div>
<div class="a" style="left:887px;top:544px;width:10px;height:10px;border-radius:50%;background:#1d6496"></div>
<div class="t" style="left:883px;top:545px;width:383px;text-align:center;font-size:10px;color:#444;letter-spacing:-0.1px">my alias</div>
<svg style="left:1249.3px;top:542.9px" width="13" height="13" viewBox="-6.5 -6.5 13 13"><path d="M-4.2 0H4.2M0 -4.2V4.2" stroke="#222" stroke-width="1.3"/><path d="M-5.6 0L-3.2 -2.2V2.2ZM5.6 0L3.2 -2.2V2.2ZM0 -5.6L-2.2 -3.2H2.2ZM0 5.6L-2.2 3.2H2.2Z" fill="#222"/></svg>
<div class="a" style="left:1274px;top:530px;width:32px;height:32px;background:#1560bd;border-radius:3px"></div>
<svg style="left:1280px;top:536px" width="20" height="20" viewBox="0 0 24 24"><path fill-rule="evenodd" fill="#fff" d="M18.69 9.95 L21.35 9.84 L21.35 14.16 L18.69 14.05 L18.18 15.29 L20.14 17.09 L17.09 20.14 L15.29 18.18 L14.05 18.69 L14.16 21.35 L9.84 21.35 L9.95 18.69 L8.71 18.18 L6.91 20.14 L3.86 17.09 L5.82 15.29 L5.31 14.05 L2.65 14.16 L2.65 9.84 L5.31 9.95 L5.82 8.71 L3.86 6.91 L6.91 3.86 L8.71 5.82 L9.95 5.31 L9.84 2.65 L14.16 2.65 L14.05 5.31 L15.29 5.82 L17.09 3.86 L20.14 6.91 L18.18 8.71ZM15.00 12.00A3.00 3.00 0 1 0 9.00 12.00A3.00 3.00 0 1 0 15.00 12.00Z"/></svg>
<div class="t" style="left:453px;top:583.5px;font-size:9.6px;color:#333;letter-spacing:0px">ACTIVE</div>
<svg style="left:0;top:0" width="1380" height="900"><path d="M491 570.5H497.5V608H491" fill="none" stroke="#79b35a" stroke-width="1.6"/><path d="M491 589H1305" stroke="#79b35a" stroke-width="2"/><path d="M491 623.5H497.5V662H491M491 633H497.5M491 643H497.5M491 652.5H497.5" fill="none" stroke="#3b86b8" stroke-width="1.6"/></svg>
<div class="t" style="right:892px;top:619.3px;font-size:9.5px;color:#333;letter-spacing:-0.1px">39.9</div>
<div class="t" style="right:892px;top:629.3px;font-size:9.5px;color:#333;letter-spacing:-0.1px">30</div>
<div class="t" style="right:892px;top:638.8px;font-size:9.5px;color:#333;letter-spacing:-0.1px">20</div>
<div class="t" style="right:892px;top:648.3px;font-size:9.5px;color:#333;letter-spacing:-0.1px">10</div>
<div class="t" style="right:892px;top:657.8px;font-size:9.5px;color:#333;letter-spacing:-0.1px">0</div>
<div class="t" style="left:519.9px;top:670.8px;width:50px;margin-left:-25px;text-align:center;font-size:9.5px;color:#333;letter-spacing:0px">06:35</div>
<div class="t" style="left:577.7px;top:670.8px;width:50px;margin-left:-25px;text-align:center;font-size:9.5px;color:#333;letter-spacing:0px">06:40</div>
<div class="t" style="left:635.5px;top:670.8px;width:50px;margin-left:-25px;text-align:center;font-size:9.5px;color:#333;letter-spacing:0px">06:45</div>
<div class="t" style="left:693.3px;top:670.8px;width:50px;margin-left:-25px;text-align:center;font-size:9.5px;color:#333;letter-spacing:0px">06:50</div>
<div class="t" style="left:751.1px;top:670.8px;width:50px;margin-left:-25px;text-align:center;font-size:9.5px;color:#333;letter-spacing:0px">06:55</div>
<div class="t" style="left:808.9px;top:670.8px;width:50px;margin-left:-25px;text-align:center;font-size:9.5px;color:#333;letter-spacing:0px">07 PM</div>
<div class="t" style="left:866.7px;top:670.8px;width:50px;margin-left:-25px;text-align:center;font-size:9.5px;color:#333;letter-spacing:0px">07:05</div>
<div class="t" style="left:924.5px;top:670.8px;width:50px;margin-left:-25px;text-align:center;font-size:9.5px;color:#333;letter-spacing:0px">07:10</div>
<div class="t" style="left:982.3px;top:670.8px;width:50px;margin-left:-25px;text-align:center;font-size:9.5px;color:#333;letter-spacing:0px">07:15</div>
<div class="t" style="left:1040.1px;top:670.8px;width:50px;margin-left:-25px;text-align:center;font-size:9.5px;color:#333;letter-spacing:0px">07:20</div>
<div class="t" style="left:1097.9px;top:670.8px;width:50px;margin-left:-25px;text-align:center;font-size:9.5px;color:#333;letter-spacing:0px">07:25</div>
<div class="t" style="left:1155.7px;top:670.8px;width:50px;margin-left:-25px;text-align:center;font-size:9.5px;color:#333;letter-spacing:0px">07:30</div>
<div class="t" style="left:1213.5px;top:670.8px;width:50px;margin-left:-25px;text-align:center;font-size:9.5px;color:#333;letter-spacing:0px">07:35</div>
<div class="t" style="left:1271.3px;top:670.8px;width:50px;margin-left:-25px;text-align:center;font-size:9.5px;color:#333;letter-spacing:0px">07:40</div>
<svg style="left:0;top:0" width="1380" height="900"><path d="M497.4 661.1 L502.6 660.1 L507.8 659.9 L511.8 659.2 L515.7 658.1 L519.7 657.5 L523.4 657.0 L527.1 656.4 L530.8 655.0 L534.5 654.3 L538.3 654.8 L542.0 653.4 L545.7 652.8 L549.4 652.5 L553.1 652.6 L556.8 651.3 L560.5 651.2 L564.2 650.1 L568.0 649.7 L571.7 648.4 L575.4 648.5 L579.1 647.7 L583.1 647.5 L587.0 646.4 L591.0 646.0 L595.0 645.2 L598.9 643.7 L602.9 643.6 L607.1 643.8 L611.2 643.4 L615.4 642.8 L619.5 642.2 L623.7 642.7 L627.4 643.2 L631.1 642.6 L634.8 642.9 L638.5 643.1 L642.3 642.8 L646.0 643.1 L649.7 642.3 L653.4 642.4 L657.1 643.0 L660.8 642.8 L664.5 643.7 L668.2 643.3 L671.9 643.7 L675.7 642.4 L679.4 642.3 L683.1 642.3 L686.8 643.2 L690.5 642.3 L694.3 642.4 L698.0 642.1 L701.7 641.4 L705.4 641.4 L709.1 640.8 L712.8 640.6 L716.5 640.2 L720.2 640.3 L724.0 640.0 L727.7 639.7 L731.4 639.9 L735.1 639.2 L738.8 639.2 L742.5 638.7 L746.3 638.5 L750.0 637.7 L753.7 636.6 L757.4 636.7 L761.1 636.8 L764.8 636.6 L768.5 636.2 L772.2 635.3 L776.0 635.2 L779.7 634.1 L783.4 634.6 L787.1 633.8 L790.8 633.7 L794.5 633.1 L798.2 632.6 L802.0 633.5 L805.7 633.5 L809.4 632.1 L813.1 632.9 L816.8 632.3 L820.5 631.9 L824.2 631.2 L827.9 631.1 L831.6 631.5 L835.4 631.3 L839.1 629.9 L842.8 630.4 L846.5 629.9 L850.2 629.0 L853.9 629.7 L857.6 628.9 L861.4 629.4 L865.1 629.3 L868.8 628.3 L872.5 628.8 L876.2 627.8 L880.2 627.1 L884.1 626.4 L888.1 626.7 L892.1 625.5 L896.0 625.4 L900.0 625.4 L904.1 624.9 L908.2 624.9 L912.2 623.9 L916.3 623.4 L920.4 623.7 L924.2 624.3 L928.0 623.6 L931.8 624.6 L935.6 624.6 L939.5 623.9 L943.3 624.1 L947.1 624.3 L950.9 624.3 L954.7 624.5 L958.5 624.5 L962.3 624.5 L966.1 624.6 L969.9 625.1 L973.7 624.5 L977.5 624.5 L981.3 624.6 L985.1 624.8 L988.9 624.0 L992.7 624.0 L996.5 624.8 L1000.3 624.1 L1004.1 624.0 L1007.9 623.1 L1011.7 623.7 L1015.8 623.7 L1019.8 624.0 L1023.9 623.3 L1028.0 624.3 L1032.0 624.4 L1036.1 624.3 L1039.6 624.1 L1043.2 625.3 L1046.8 625.5 L1050.3 626.2 L1053.9 626.1 L1057.4 626.7 L1061.3 627.4 L1065.2 627.9 L1069.1 627.4 L1073.1 627.9 L1077.0 629.2 L1080.9 630.0 L1084.8 629.8 L1088.8 629.8 L1092.9 630.4 L1096.9 631.0 L1101.0 630.9 L1105.0 631.4 L1109.1 631.9 L1113.2 631.9 L1117.2 632.2 L1121.3 632.8 L1125.4 632.6 L1129.4 633.0 L1133.5 633.4 L1138.0 634.6 L1142.6 635.0 L1146.1 635.2 L1149.7 636.9 L1153.2 638.0 L1156.8 638.3 L1160.4 639.1 L1163.9 640.4 L1167.7 642.1 L1171.5 642.6 L1175.3 643.7 L1179.1 645.4 L1182.9 647.0 L1186.7 647.4 L1190.5 649.0 L1194.3 650.5 L1198.1 651.2 L1201.9 652.8 L1205.7 653.1 L1209.5 654.1 L1213.3 655.0 L1217.1 654.4 L1220.9 655.0 L1224.7 655.6 L1228.5 656.3 L1232.3 657.1 L1236.1 656.9 L1240.0 657.1 L1243.8 657.4 L1247.6 658.4 L1251.4 658.4 L1255.2 659.3 L1259.0 660.2 L1262.8 660.7 L1266.6 660.2 L1270.4 661.1 L1273.9 660.9 L1277.4 661.7 L1280.9 661.5 L1284.4 661.8 L1287.9 661.2 L1291.4 660.9 L1294.9 661.2 L1298.4 662.0 L1301.9 661.3 L1305.4 661.7" fill="none" stroke="#1d6496" stroke-width="1.2" stroke-linejoin="round"/><path d="M497.4 661.6 L519.7 658.0 L549.4 653.2 L579.1 648.6 L602.9 644.5 L623.7 643.2 L653.4 642.9 L698.0 642.6 L727.7 640.3 L757.4 637.3 L787.1 634.4 L816.8 632.8 L846.5 630.6 L876.2 628.5 L900.0 626.2 L950.9 624.8 L1011.7 624.2 L1042.0 624.6 L1084.8 628.9 L1133.5 631.9 L1157.8 633.7 L1179.1 638.9 L1209.5 649.6 L1224.7 653.5 L1255.2 655.6 L1285.6 658.7 L1305.4 661.1" fill="none" stroke="#1d6496" stroke-width="1.2" stroke-dasharray="2 2.2"/><path d="M497 666.5H1305.5M497.5 666V671M1305 666V671M519.9 666V671M577.7 666V671M635.5 666V671M693.3 666V671M751.1 666V671M808.9 666V671M866.7 666V671M924.5 666V671M982.3 666V671M1040.1 666V671M1097.9 666V671M1155.7 666V671M1213.5 666V671M1271.3 666V671" fill="none" stroke="#6e6e6e" stroke-width="1.6"/></svg>
<div class="box" style="left:497px;top:690px;width:32px;height:31px;border-radius:3px;border-color:#dedede"></div>
<svg style="left:510.5px;top:703px" width="4" height="6"><path d="M4 0V6L0 3Z" fill="#333"/></svg>
<div class="box" style="left:533px;top:690px;width:32px;height:31px;border-radius:3px;border-color:#dedede"></div>
<svg style="left:541px;top:697px" width="16" height="17" viewBox="0 0 16 17" fill="none" stroke="#777" stroke-width="1.1"><rect x="1" y="2.5" width="14" height="13.5" rx="0.8"/><path d="M1 5.5H15M4.5 1V4M11.5 1V4"/><rect x="10" y="11" width="3" height="3" fill="#777" stroke="none"/></svg>
<div class="box" style="left:569px;top:690px;width:34px;height:31px;border-radius:3px;border-color:#dedede"></div>
<svg style="left:577px;top:697px" width="17" height="17" viewBox="0 0 17 17" fill="none" stroke="#777" stroke-width="1.1"><circle cx="8.5" cy="8.5" r="7.5"/><path d="M8.5 4V9H12"/></svg>
<div class="box" style="left:755px;top:690px;width:144px;height:31px;border-radius:3px;border-color:#dedede"></div>
<svg style="left:764px;top:699px" width="17" height="17" viewBox="0 0 17 17" fill="none" stroke="#8a8a8a" stroke-width="1"><path d="M0.5 0V15.5H16"/><path d="M0.5 7.4H14.2"/><path d="M2 7.2C3 4.6 5 3.9 8 3.6C10.4 3.3 11.8 2.7 12.6 1.4" stroke-width="1.1"/><path d="M1.2 15L3.8 12.6H5.6L7.8 10.9H9.6L11.2 9.6H12.6" stroke-dasharray="1.3 0.7" stroke-width="0.9"/></svg>
<div class="t" style="left:787px;top:699px;font-size:14px;color:#333;letter-spacing:-0.15px">Stacked trend</div>
<svg style="left:877px;top:703px" width="10" height="5"><path d="M0 5H10L5 0Z" fill="#999"/></svg>
<div class="box" style="left:903px;top:690px;width:109px;height:31px;border-radius:3px;border-color:#dedede"></div>
<div class="vl" style="left:981px;top:691px;height:29px"></div>
<div class="t" style="left:916px;top:699px;font-size:14px;color:#333;letter-spacing:0.05px">&plusmn; 1 hour</div>
<svg style="left:990px;top:697px" width="12" height="16" viewBox="0 0 12 16"><path d="M3 7V4.3Q3 1.3 6 1.3Q9 1.3 9 4.3V5" fill="none" stroke="#444" stroke-width="1.4"/><rect x="1" y="7" width="10" height="8.2" rx="1" fill="none" stroke="#444" stroke-width="1.4"/><circle cx="6" cy="11" r="1.2" fill="#444"/></svg>
<div class="box" style="left:1016px;top:690px;width:32px;height:31px;border-radius:3px;border-color:#dedede"></div>
<svg style="left:1023px;top:697px" width="18" height="17" viewBox="0 0 18 17" fill="none" stroke="#444" stroke-width="1.5"><path d="M3.3 8.5A6.7 6.7 0 1 0 5.3 3.7"/><path d="M1 6.2L3.3 9.2L6 6.6" stroke-width="1.4"/><path d="M10 4.7V8.7L12.7 10.5"/></svg>
<div class="box" style="left:1200px;top:690px;width:32px;height:31px;border-radius:3px;border-color:#dedede"></div>
<svg style="left:1208px;top:697px" width="16" height="17" viewBox="0 0 16 17" fill="none" stroke="#777" stroke-width="1.1"><rect x="1" y="2.5" width="14" height="13.5" rx="0.8"/><path d="M1 5.5H15M4.5 1V4M11.5 1V4"/><rect x="10" y="11" width="3" height="3" fill="#777" stroke="none"/></svg>
<div class="box" style="left:1236px;top:690px;width:34px;height:31px;border-radius:3px;border-color:#dedede"></div>
<svg style="left:1244px;top:697px" width="17" height="17" viewBox="0 0 17 17" fill="none" stroke="#777" stroke-width="1.1"><circle cx="8.5" cy="8.5" r="7.5"/><path d="M8.5 4V9H12"/></svg>
<div class="box" style="left:1274px;top:690px;width:32px;height:31px;border-radius:3px;border-color:#dedede"></div>
<svg style="left:1288.3px;top:703px" width="4" height="6"><path d="M0 0V6L4 3Z" fill="#333"/></svg>
<svg style="left:0;top:0" width="1380" height="900">
<path d="M497 759L498.1 733.3L498.9 757.9L500.4 731.3L501.6 757.3L502.7 732.5L503.9 756.4L504.9 730.7L506.2 756.9L507.8 733.0L508.4 755.3L509.2 731.5L510.5 755.6L511.3 745.4L512.1 756.8L512.8 730.6L514.1 738.7L514.7 741.0L515.4 755.9L516.4 732.6L517.5 758.5L518.1 732.7L519.5 755.5L520.0 732.9L520.8 759.0L521.5 732.7L522.0 755.4L523.3 732.6L524.4 756.2L526.0 743.1L527.3 739.3L528.6 733.3L529.8 758.4L531.2 732.5L532.7 758.9L533.9 732.8L535.1 758.2L535.7 731.7L536.8 755.9L538.4 730.8L539.7 757.6L541.0 730.5L541.9 759.1L542.6 750.1L543.9 742.6L545.3 733.8L546.9 758.4L547.4 730.5L548.6 742.0L549.4 732.7L550.2 755.4L550.8 731.0L551.5 758.6L552.5 733.4L553.0 755.4L553.9 731.6L555.3 755.0L556.2 731.8L557.0 755.2L558.5 753.5L559.8 759.3L561.1 730.7L562.5 757.3L563.4 747.2L564.2 755.9L565.1 734.2L566.4 759.1L567.2 733.5L568.6 757.0L569.2 734.0L569.9 755.1L570.8 732.6L571.8 738.4L572.9 734.6L574.0 755.4L575.6 734.5L576.5 757.6L578.1 732.7L579.0 757.4L579.8 732.6L580.5 756.1L582.0 731.9L583.5 758.9L584.2 732.5L585.0 757.7L586.5 736.6L587.4 757.5L588.8 733.4L590.2 756.5L591.1 750.2L592.5 755.1L593.1 732.4L594.6 756.9L595.5 731.6L596.1 755.1L597.4 733.5L599.0 755.4L599.8 731.3L601.1 755.6L602.5 732.2L603.3 756.5L604.2 745.6L605.3 756.4L606.8 733.5L607.5 757.8L608.2 732.9L609.4 747.4L610.1 732.0L611.7 756.4L612.6 734.7L613.8 755.4L615.1 734.6L616.2 756.8L617.4 733.3L618.7 759.2L620.2 733.8L621.6 756.6L623.1 734.5L624.3 757.2L625.5 734.5L626.3 758.4L627.0 745.9L628.4 756.1L629.0 731.4L630.3 757.2L631.2 732.2L631.7 755.9L632.9 731.4L634.5 757.9L635.9 733.7L637.0 743.7L637.9 731.7L639.4 742.0L640.1 730.6L641.2 755.1L641.9 732.7L643.4 756.8L644.5 730.9L645.9 758.5L647.5 732.2L648.9 759.2L650.3 732.0L651.5 755.5L652.4 731.4L653.6 750.4L655.2 731.5L655.8 756.0L657.0 733.0L658.2 758.4L659.3 731.5L660.8 758.7L662.3 734.1L663.0 756.9L664.5 744.0L666.0 759.0L666.6 731.4L667.6 756.4L668.1 732.7L669.3 759.0L670.5 743.7L672.1 755.7L673.4 731.7L674.7 755.6L676.2 750.1L677.4 744.6L678.7 733.8L679.6 757.0L681.2 747.1L681.8 758.9L683.3 734.6L684.0 755.3L685.0 734.0L686.0 758.3L687.0 732.3L687.6 757.1L688.9 734.6L690.4 758.2L691.5 732.1L692.1 759.0L692.6 730.9L693.4 758.8L694.9 731.8L696.4 758.9L697.0 730.8L697.9 741.8L698.8 733.5L699.4 758.6L700.9 735.0L701.5 758.3L702.5 730.6L703.7 758.4L705.0 730.7L706.5 756.6L708.0 732.4L709.2 758.5L710.5 734.8L712.0 755.6L713.4 732.3L714.2 756.6L715.2 731.6L715.9 756.2L717.4 731.7L718.8 753.5L719.5 733.3L720.9 756.7L722.3 733.7L723.1 757.6L724.4 736.1L725.8 755.8L726.8 734.8L728.2 755.5L729.1 730.7L729.9 743.9L730.9 732.5L731.7 759.1L733.3 731.8L734.8 758.1L735.4 748.2L736.8 758.4L738.0 734.9L739.5 758.6L740.5 751.3L741.9 749.1L743.4 733.7L745.0 758.2L745.8 734.0L746.6 756.5L747.2 731.2L747.9 755.1L749.3 732.0L750.8 755.1L751.9 731.3L753.3 757.4L754.7 730.8L755.8 756.4L756.9 731.0L757.8 759.0L759.2 731.0L760.4 759.2L761.3 734.1L762.4 757.0L763.6 731.0L764.6 755.8L765.3 734.8L766.4 755.0L767.7 732.7L768.8 757.8L770.3 751.0L771.0 756.9L772.5 731.3L773.6 758.1L774.8 743.3L776.2 758.6L777.1 731.6L778.5 758.6L779.1 733.6L779.7 755.0L780.6 733.0L781.6 757.8L783.0 733.5L784.1 757.4L785.4 731.7L786.1 756.2L787.1 731.2L788.2 755.1L789.1 731.8L789.8 755.4L791.0 732.6L792.2 758.8L793.1 732.0L794.2 755.9L795.7 744.6L796.9 755.2L798.3 733.0L799.5 756.8L800.6 732.1L801.1 757.8L801.9 731.2L802.9 757.6L804.1 732.1L805.4 758.3L806.1 732.1L806.9 756.0L807.9 733.3L808.9 759.4L809.6 732.8L811.2 756.2L811.9 731.5L812.8 756.5L813.8 731.0L815.0 736.6L815.7 732.8L817.2 758.7L818.0 736.5L819.1 759.3L819.7 731.6L821.1 755.5L822.6 734.0L823.6 751.5L824.9 732.1L825.5 759.1L826.6 733.6L828.0 756.2L828.7 733.7L829.7 758.3L830.3 731.5L831.5 758.7L833.0 731.4L834.5 756.3L835.0 731.8L836.2 755.6L837.3 730.6L837.8 759.2L839.1 732.2L840.1 744.6L841.3 734.9L842.8 758.2L844.3 730.7L844.9 744.1L846.2 734.1L847.1 756.3L848.0 732.8L848.6 751.7L849.1 730.5L850.0 756.8L850.6 733.2L851.6 755.1L853.1 731.4L854.3 758.5L855.4 734.1L856.1 755.3L857.3 733.5L858.8 757.7L859.5 731.3L860.8 756.9L861.6 734.3L862.9 758.6L863.9 732.2L865.4 756.5L866.7 731.7L867.7 757.1L868.9 732.7L869.8 755.6L871.2 747.5L872.5 757.8L873.4 731.2L873.9 758.9L875.1 732.8L876.0 758.5L877.6 733.0L878.8 759.3L879.3 732.8L879.9 756.6L881.1 732.0L882.5 758.2L883.2 732.4L884.0 756.9L885.3 731.4L886.5 756.1L887.2 732.5L888.1 756.4L889.6 731.6L890.4 757.2L891.8 733.1L892.7 758.1L893.4 732.3L894.6 755.7L895.9 730.6L897.2 757.9L897.7 736.3L899.0 757.0L899.7 732.2L900.2 757.3L901.7 732.4L902.8 752.1L903.9 732.1L904.6 756.9L906.1 732.6L907.2 756.3L908.1 731.4L909.4 755.4L911.0 733.1L912.4 758.3L912.9 734.6L913.8 755.0L915.1 733.2L916.4 747.1L917.3 732.2L918.4 755.4L919.0 743.4L919.8 759.5L921.4 742.8L922.0 757.2L922.7 731.1L924.3 757.4L925.8 732.4L926.3 757.4L927.2 731.0L928.5 742.9L929.6 731.7L930.7 758.6L932.2 733.4L933.2 758.9L934.4 731.3L935.6 759.4L936.3 730.7L937.4 756.1L938.1 734.6L938.8 755.5L940.2 733.6L941.7 758.1L943.2 733.9L944.2 737.4L945.6 732.5L947.2 740.7L948.7 737.2L949.6 759.0L951.0 732.1L952.1 756.1L953.2 732.3L954.8 755.2L956.1 734.6L957.0 756.6L958.1 749.9L959.4 759.5L960.6 734.3L961.2 758.1L961.9 735.0L963.5 740.2L964.8 737.7L966.3 759.0L967.2 731.6L967.7 755.9L969.3 732.2L970.5 759.1L971.6 733.5L972.4 756.5L973.4 735.0L973.9 757.5L975.5 731.2L977.0 756.2L977.7 732.7L978.4 757.2L979.1 744.3L979.8 755.6L981.2 739.2L982.6 757.5L983.6 731.2L984.1 758.5L985.0 742.2L986.2 757.8L987.6 732.6L988.3 758.5L988.8 734.0L989.5 755.6L990.9 734.4L991.7 756.2L992.3 732.6L993.7 758.4L994.8 733.8L996.1 736.6L996.8 732.3L997.4 758.0L998.3 734.5L999.1 759.4L999.8 730.8L1001.0 756.6L1002.2 733.0L1003.5 755.3L1004.8 734.0L1006.2 756.1L1007.5 732.8L1008.4 758.1L1009.3 733.4L1010.2 757.0L1011.1 732.2L1011.7 756.7L1012.6 734.1L1013.6 757.0L1014.7 734.6L1015.3 758.6L1016.4 731.4L1017.4 755.6L1018.8 738.9L1020.4 757.6L1021.7 733.2L1023.2 756.1L1024.4 734.8L1025.6 752.1L1026.6 743.9L1028.0 758.7L1029.6 733.5L1030.3 757.6L1031.1 739.5L1031.8 757.3L1032.5 731.5L1034.0 757.2L1035.2 732.7L1035.9 756.7L1037.2 733.9L1038.6 756.4L1039.1 733.5L1040.5 758.7L1041.9 731.9L1043.3 755.2L1044.1 734.3L1045.1 755.5L1045.9 733.2L1047.3 757.8L1048.3 732.9L1049.6 740.2L1050.8 734.3L1051.8 756.1L1052.4 731.6L1053.4 757.7L1054.0 745.2L1055.2 756.9L1056.3 742.1L1057.6 757.7L1058.6 738.7L1060.0 758.0L1061.0 741.0L1061.8 750.2L1062.8 730.6L1063.5 758.1L1064.5 732.1L1065.4 755.5L1066.6 731.5L1067.9 755.5L1068.8 732.8L1070.2 757.7L1071.0 734.0L1071.8 755.1L1073.2 734.1L1074.2 759.1L1075.0 732.1L1075.9 756.2L1077.4 730.7L1078.7 750.7L1079.6 733.4L1081.0 759.1L1081.6 731.8L1082.3 756.1L1083.8 733.3L1085.4 758.9L1086.3 731.9L1087.7 756.4L1089.1 730.9L1089.6 756.1L1090.8 734.9L1092.3 758.6L1093.9 730.6L1094.8 756.1L1096.1 734.6L1097.6 756.5L1099.1 733.6L1099.9 755.6L1101.3 752.4L1102.8 750.4L1103.5 732.8L1105.0 748.1L1105.7 734.0L1106.8 757.9L1107.4 750.8L1108.3 755.0L1109.3 733.5L1109.8 755.0L1111.0 732.2L1112.3 758.7L1113.0 731.9L1113.9 746.5L1115.4 734.4L1116.3 756.5L1117.3 733.3L1118.8 759.4L1120.0 734.5L1121.0 736.8L1122.1 731.1L1123.5 756.4L1125.0 732.6L1126.6 756.4L1127.9 732.7L1128.8 757.9L1130.0 731.8L1130.9 758.7L1131.5 730.9L1133.0 756.2L1134.2 732.6L1135.7 757.7L1136.4 733.0L1137.2 756.3L1137.9 732.0L1138.4 756.9L1139.6 731.7L1140.2 744.2L1141.1 732.5L1142.1 758.0L1142.9 731.0L1143.6 758.0L1144.3 733.4L1145.4 757.1L1146.5 735.0L1147.1 757.8L1148.1 733.4L1149.1 743.1L1150.3 730.6L1151.4 756.3L1152.7 732.9L1154.1 758.3L1155.0 742.0L1156.4 759.1L1157.2 731.9L1158.7 756.1L1159.5 732.0L1160.1 756.1L1161.5 734.1L1162.5 756.9L1163.3 730.6L1164.2 756.7L1164.7 731.0L1165.7 757.8L1167.1 734.4L1168.3 757.6L1169.6 733.0L1170.2 759.2L1170.8 734.6L1171.4 756.4L1172.8 750.7L1174.2 755.3L1175.0 731.0L1176.3 759.4L1177.0 731.7L1178.4 759.4L1180.0 734.2L1181.3 757.2L1181.8 731.6L1183.2 755.1L1184.7 733.6L1185.4 744.5L1185.9 732.0L1187.2 756.2L1188.3 733.5L1189.9 758.7L1191.3 734.0L1192.0 756.8L1193.6 734.4L1194.5 758.5L1195.7 731.5L1196.2 757.2L1197.5 732.3L1198.3 758.4L1199.9 732.4L1200.5 747.0L1201.4 731.2L1202.4 755.4L1203.0 733.1L1203.6 755.9L1205.1 733.5L1206.3 758.6L1207.7 734.7L1209.0 755.5L1210.6 733.3L1212.0 758.0L1213.4 731.3L1214.4 755.1L1215.6 731.9L1216.5 758.8L1218.0 734.0L1219.0 757.1L1220.3 748.6L1221.0 753.0L1221.6 737.2L1222.1 759.3L1223.1 748.3L1224.0 758.2L1225.5 734.0L1226.3 759.3L1226.8 735.0L1227.7 756.9L1228.7 732.4L1229.7 756.4L1231.1 731.6L1231.7 758.7L1232.8 733.5L1233.6 742.7L1235.0 731.6L1236.2 757.1L1237.3 734.8L1238.8 757.7L1240.3 730.5L1240.9 756.5L1241.6 731.1L1242.9 756.9L1243.8 741.2L1244.8 755.8L1245.8 734.6L1246.8 758.3L1247.7 731.6L1248.4 757.9L1249.0 734.6L1249.5 751.2L1250.7 738.9L1251.8 757.5L1253.3 730.8L1254.4 742.1L1255.1 734.7L1256.1 756.3L1257.2 734.6L1258.1 741.2L1258.7 732.3L1259.9 757.5L1261.4 733.0L1262.5 759.2L1263.7 732.4L1264.8 756.0L1266.1 740.3L1267.5 755.1L1268.9 731.0L1269.6 759.0L1270.4 734.7L1271.8 756.3L1272.4 733.0L1273.8 744.0L1274.9 730.6L1275.9 759.2L1276.5 753.8L1277.1 757.5L1278.2 731.1L1279.2 756.5L1280.5 732.7L1281.1 756.7L1282.6 731.9L1283.4 757.7L1284.4 734.6L1285.6 757.2L1287.1 733.6L1288.0 756.9L1288.6 731.9L1289.3 757.1L1290.2 734.9L1291.0 759.0L1292.0 733.0L1293.4 757.0L1295.0 732.9L1296.2 743.9L1297.1 731.1L1298.3 757.1L1299.6 734.2L1301.0 758.2L1302.0 731.5" fill="none" stroke="#5b9bc0" stroke-width="0.85" stroke-opacity="0.85"/>
<path d="M497 759V730.5H503.9V759H506.1V730.5H512.0V759H513.6V730.5H526.5V759H528.5V730.5H535.2V759H536.6V730.5H543.5V759H545.5V730.5H553.2V759H555.4V730.5H566.4V759H568.6V730.5H577.9V759H579.2V730.5H590.0V759H591.6V730.5H596.1V759H597.7V730.5H603.5V759H604.4V730.5H611.1V759H613.5V730.5H624.2V759H625.8V730.5H635.6V759H637.0V730.5H646.7V759H647.9V730.5H660.5V759H662.6V730.5H671.1V759H672.8V730.5H680.5V759H682.6V730.5H695.0V759H697.4V730.5H702.4V759H704.8V730.5H711.0V759H712.0V730.5H720.1V759H722.0V730.5H727.1V759H729.0V730.5H742.7V759H744.8V730.5H757.1V759H758.2V730.5H765.5V759H766.8V730.5H774.5V759H776.8V730.5H790.7V759H792.0V730.5H801.6V759H803.4V730.5H817.2V759H818.7V730.5H823.9V759H824.9V730.5H830.3V759H831.9V730.5H836.8V759H838.8V730.5H844.8V759H845.6V730.5H856.8V759H858.4V730.5H870.0V759H871.8V730.5H879.6V759H880.5V730.5H893.0V759H895.0V730.5H901.6V759H902.5V730.5H912.8V759H915.2V730.5H926.6V759H929.0V730.5H943.0V759H944.0V730.5H949.8V759H951.4V730.5H956.5V759H958.1V730.5H970.3V759H971.5V730.5H983.7V759H984.9V730.5H997.1V759H998.0V730.5H1003.2V759H1004.1V730.5H1013.9V759H1014.7V730.5H1025.7V759H1027.2V730.5H1040.2V759H1041.7V730.5H1054.0V759H1056.1V730.5H1063.9V759H1066.0V730.5H1076.0V759H1077.8V730.5H1086.1V759H1087.1V730.5H1096.3V759H1098.0V730.5H1106.4V759H1108.8V730.5H1114.5V759H1116.9V730.5H1126.5V759H1127.4V730.5H1137.1V759H1138.2V730.5H1147.1V759H1148.8V730.5H1160.5V759H1162.8V730.5H1167.5V759H1169.8V730.5H1183.2V759H1184.3V730.5H1189.1V759H1190.7V730.5H1195.0V759H1196.0V730.5H1205.1V759H1206.3V730.5H1216.3V759H1217.4V730.5H1228.1V759H1229.9V730.5H1234.7V759H1236.7V730.5H1249.9V759H1252.4V730.5H1256.8V759H1258.8V730.5H1266.0V759H1267.5V730.5H1276.1V759H1276.9V730.5H1287.2V759H1288.3V730.5H1300.8V759H1301.8V730.5H1302" fill="none" stroke="#86bb6a" stroke-width="1"/>
<rect x="497" y="760" width="808" height="12" fill="#165fbc"/>
<rect x="1301" y="737" width="4.5" height="18" fill="#222" rx="1"/>
<path d="M1304.6 729.5V772" stroke="#222" stroke-width="1.2"/><rect x="1303" y="763" width="2.2" height="6" fill="#aaa"/>
<path d="M497 774H1305.5M497.7 773V778.5M621.7 774V778.5M759.5 774V778.5M897 774V778.5M1025.5 774V778.5M1163 774V778.5M1296 774V778.5M1305 774V778.5" fill="none" stroke="#6a6a6a" stroke-width="1.6"/>
</svg>
<div class="t" style="left:621.7px;top:779.5px;width:50px;margin-left:-25px;text-align:center;font-size:9.5px;color:#333;letter-spacing:0px">Dec</div>
<div class="t" style="left:759.5px;top:779.5px;width:50px;margin-left:-25px;text-align:center;font-size:9.5px;color:#333;letter-spacing:0px">2024</div>
<div class="t" style="left:897.0px;top:779.5px;width:50px;margin-left:-25px;text-align:center;font-size:9.5px;color:#333;letter-spacing:0px">Feb</div>
<div class="t" style="left:1025.5px;top:779.5px;width:50px;margin-left:-25px;text-align:center;font-size:9.5px;color:#333;letter-spacing:0px">Mar</div>
<div class="t" style="left:1163.0px;top:779.5px;width:50px;margin-left:-25px;text-align:center;font-size:9.5px;color:#333;letter-spacing:0px">Apr</div>
<div class="t" style="left:1296.5px;top:779.5px;width:50px;margin-left:-25px;text-align:center;font-size:9.5px;color:#333;letter-spacing:0px">May</div>
<div class="box" style="left:497px;top:798px;width:245px;height:24px;border-radius:3px;border-color:#dedede"></div>
<div class="a" style="left:638px;top:799px;width:35px;height:22px;background:#eef4fb"></div>
<div class="vl" style="left:530px;top:799px;height:22px"></div>
<div class="vl" style="left:566px;top:799px;height:22px"></div>
<div class="vl" style="left:602px;top:799px;height:22px"></div>
<div class="vl" style="left:637px;top:799px;height:22px"></div>
<div class="vl" style="left:673px;top:799px;height:22px"></div>
<div class="vl" style="left:703px;top:799px;height:22px"></div>
<div class="t" style="left:497px;top:804px;width:33px;text-align:center;font-size:13px;color:#333;letter-spacing:-0.2px">1D</div>
<div class="t" style="left:530px;top:804px;width:36px;text-align:center;font-size:13px;color:#333;letter-spacing:-0.2px">1W</div>
<div class="t" style="left:566px;top:804px;width:36px;text-align:center;font-size:13px;color:#333;letter-spacing:-0.2px">1M</div>
<div class="t" style="left:602px;top:804px;width:35px;text-align:center;font-size:13px;color:#333;letter-spacing:-0.2px">3M</div>
<div class="t" style="left:637px;top:804px;width:36px;text-align:center;font-size:13px;color:#1a62b8;letter-spacing:-0.2px">6M</div>
<div class="t" style="left:673px;top:804px;width:30px;text-align:center;font-size:13px;color:#333;letter-spacing:-0.2px">1Y</div>
<div class="t" style="left:703px;top:804px;width:39px;text-align:center;font-size:13px;color:#333;letter-spacing:-0.2px">ALL</div>
<div class="box" style="left:758px;top:798px;width:104px;height:24px;border-radius:3px;border-color:#dedede"></div>
<div class="vl" style="left:838px;top:799px;height:22px"></div>
<div class="t" style="left:767px;top:804px;font-size:12.5px;color:#333;letter-spacing:-0.5px">CUSTOM</div>
<svg style="left:824px;top:807px" width="8" height="5"><path d="M0 5H8L4 0Z" fill="#999"/></svg>
<svg style="left:844px;top:805px" width="12" height="10" viewBox="0 0 12 10" fill="none" stroke="#555" stroke-width="1"><rect x="0.5" y="0.5" width="11" height="9" rx="1"/><path d="M2.5 3V2.5H3.5M8.5 2.5H9.5V3M9.5 7V7.5H8.5M3.5 7.5H2.5V7"/></svg>
</body></html>
